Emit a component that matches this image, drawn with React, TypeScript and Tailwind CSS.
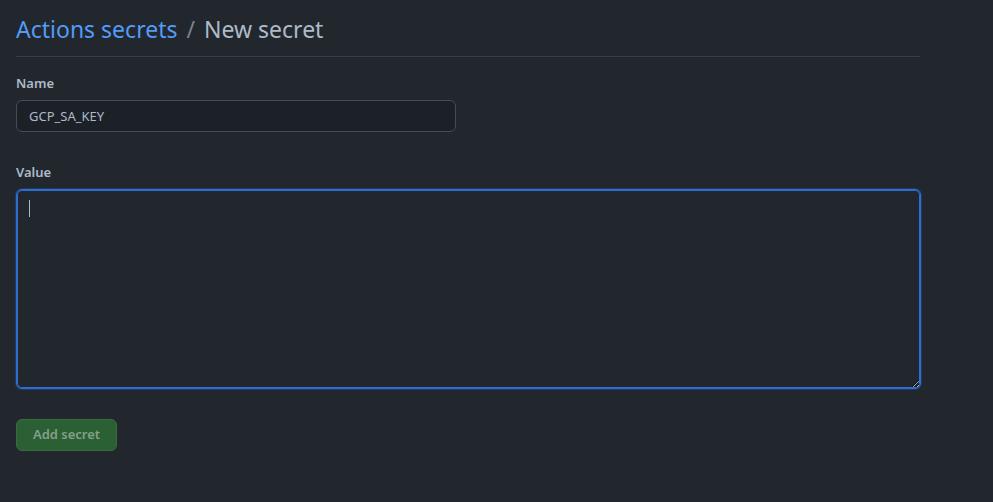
import React, { useState } from 'react';

export default function App() {
    const [name, setName] = useState('GCP_SA_KEY');
    const [value, setValue] = useState('');

    return (
        <div
            className="min-h-[502px] w-full bg-[#22272e] text-[#adbac7]"
            style={{ fontFamily: '"Noto Sans", "Open Sans", sans-serif' }}
        >
            <div className="w-[904px] ml-4">
                {/* Header */}
                <div className="pt-3 pb-[9px] border-b border-[#373e47]">
                    <h1 className="text-[23px] leading-[35px] font-normal">
                        <a href="#" className="text-[#539bf5]">Actions secrets</a>
                        <span className="mx-[9px] text-[#768390]">/</span>
                        <span className="text-[#adbac7]">New secret</span>
                    </h1>
                </div>

                {/* Form */}
                <form onSubmit={e => e.preventDefault()} className="pt-4">
                    <label className="block text-[13px] leading-[20px] font-semibold text-[#adbac7] mb-[7px]">Name</label>
                    <input
                        value={name}
                        onChange={e => setName(e.target.value)}
                        className="block w-[440px] h-8 px-3 text-[13px] text-[#adbac7] bg-[#1c2128] border border-[#444c56] rounded-md outline-none"
                    />

                    <label className="block mt-[30px] text-[13px] leading-[20px] font-semibold text-[#adbac7] mb-[7px]">Value</label>
                    <div className="relative">
                        <textarea
                            value={value}
                            onChange={e => setValue(e.target.value)}
                            className="block w-[905px] h-[200px] px-3 py-2 text-[13px] text-[#adbac7] bg-[#22272e] border border-[#316dca] rounded-md outline-none shadow-[inset_0_0_0_1px_#316dca,0_0_0_1px_#1d3a66] resize-y"
                        />
                        <div className="absolute left-[13px] top-[11px] w-px h-[17px] bg-[#adbac7]" />
                    </div>

                    <button
                        type="submit"
                        disabled
                        className="mt-[30px] h-8 w-[101px] rounded-md bg-[#2b5f34] border border-[#3a6b40] text-[13px] font-semibold text-[#84a08a]"
                    >
                        Add secret
                    </button>
                </form>
            </div>
        </div>
    );
}
